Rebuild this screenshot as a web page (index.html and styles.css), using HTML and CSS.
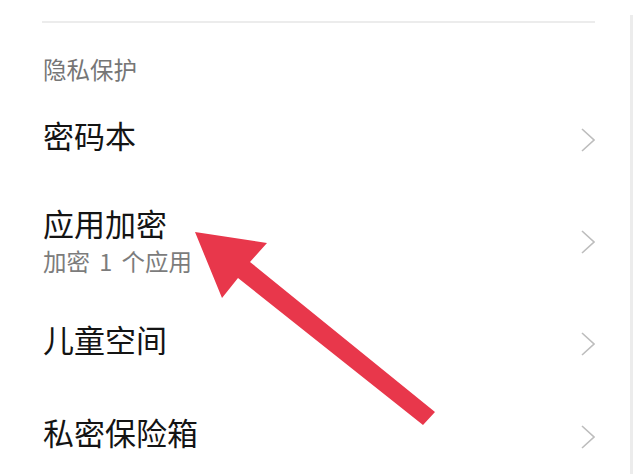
FILE: index.html
```html
<!DOCTYPE html>
<html lang="zh-CN">
<head>
<meta charset="utf-8">
<title>隐私保护</title>
<link rel="stylesheet" href="styles.css">
</head>
<body>
<div class="screen">
  <div class="panel">
    <div class="divider"></div>
    <div class="section-title">隐私保护</div>
    <ul class="list">
      <li class="item">
        <div class="text"><div class="title">密码本</div></div>
        <svg class="chevron" viewBox="0 0 14 24"><polyline points="1,1 13,12 1,23"/></svg>
      </li>
      <li class="item has-sub">
        <div class="text"><div class="title">应用加密</div><div class="sub">加密 1 个应用</div></div>
        <svg class="chevron" viewBox="0 0 14 24"><polyline points="1,1 13,12 1,23"/></svg>
      </li>
      <li class="item">
        <div class="text"><div class="title">儿童空间</div></div>
        <svg class="chevron" viewBox="0 0 14 24"><polyline points="1,1 13,12 1,23"/></svg>
      </li>
      <li class="item">
        <div class="text"><div class="title">私密保险箱</div></div>
        <svg class="chevron" viewBox="0 0 14 24"><polyline points="1,1 13,12 1,23"/></svg>
      </li>
    </ul>
  </div>
  <svg class="arrow" viewBox="0 0 640 474" width="640" height="474">
    <polygon points="195,232 267,243 250,262 435,412 423,425 238,278 222,298"/>
  </svg>
</div>
</body>
</html>
```
FILE: styles.css
```css
html, body {
  margin: 0;
  padding: 0;
  background: #ffffff;
}
body {
  font-family: "Noto Sans CJK SC", "Noto Sans", sans-serif;
  width: 640px;
  height: 474px;
  overflow: hidden;
}
.screen {
  position: relative;
  width: 640px;
  height: 474px;
  overflow: hidden;
}
.panel {
  margin-top: 15px;
  width: 633px;
  height: 600px;
  border-right: 3px solid #ececec;
  padding: 6px 35px 0 42px;
  box-sizing: border-box;
}
.divider {
  height: 2px;
  background: #ececec;
}
.section-title {
  margin-top: 34.5px;
  margin-left: 1px;
  font-size: 23.5px;
  line-height: 23px;
  color: #767676;
  margin-bottom: 7.5px;
}
.list {
  list-style: none;
  margin: 0;
  padding: 0 0 0 1px;
}
.item {
  display: flex;
  align-items: center;
  justify-content: space-between;
  padding: 29px 0;
}
.item.has-sub {
  padding: 25.5px 0 19.5px;
}
.title {
  font-size: 31px;
  line-height: 31px;
  color: #141414;
}
.sub {
  margin-top: 12px;
  font-size: 23.5px;
  line-height: 23px;
  word-spacing: 4px;
  color: #7c7c7c;
}
.chevron {
  width: 14px;
  height: 24px;
  margin-top: 11px;
  fill: none;
  stroke: #bdbdbd;
  stroke-width: 1.6;
}
.has-sub .chevron {
  margin-top: 4px;
}
.arrow {
  position: absolute;
  left: 0;
  top: 0;
}
.arrow polygon {
  fill: #e8374b;
}
```
